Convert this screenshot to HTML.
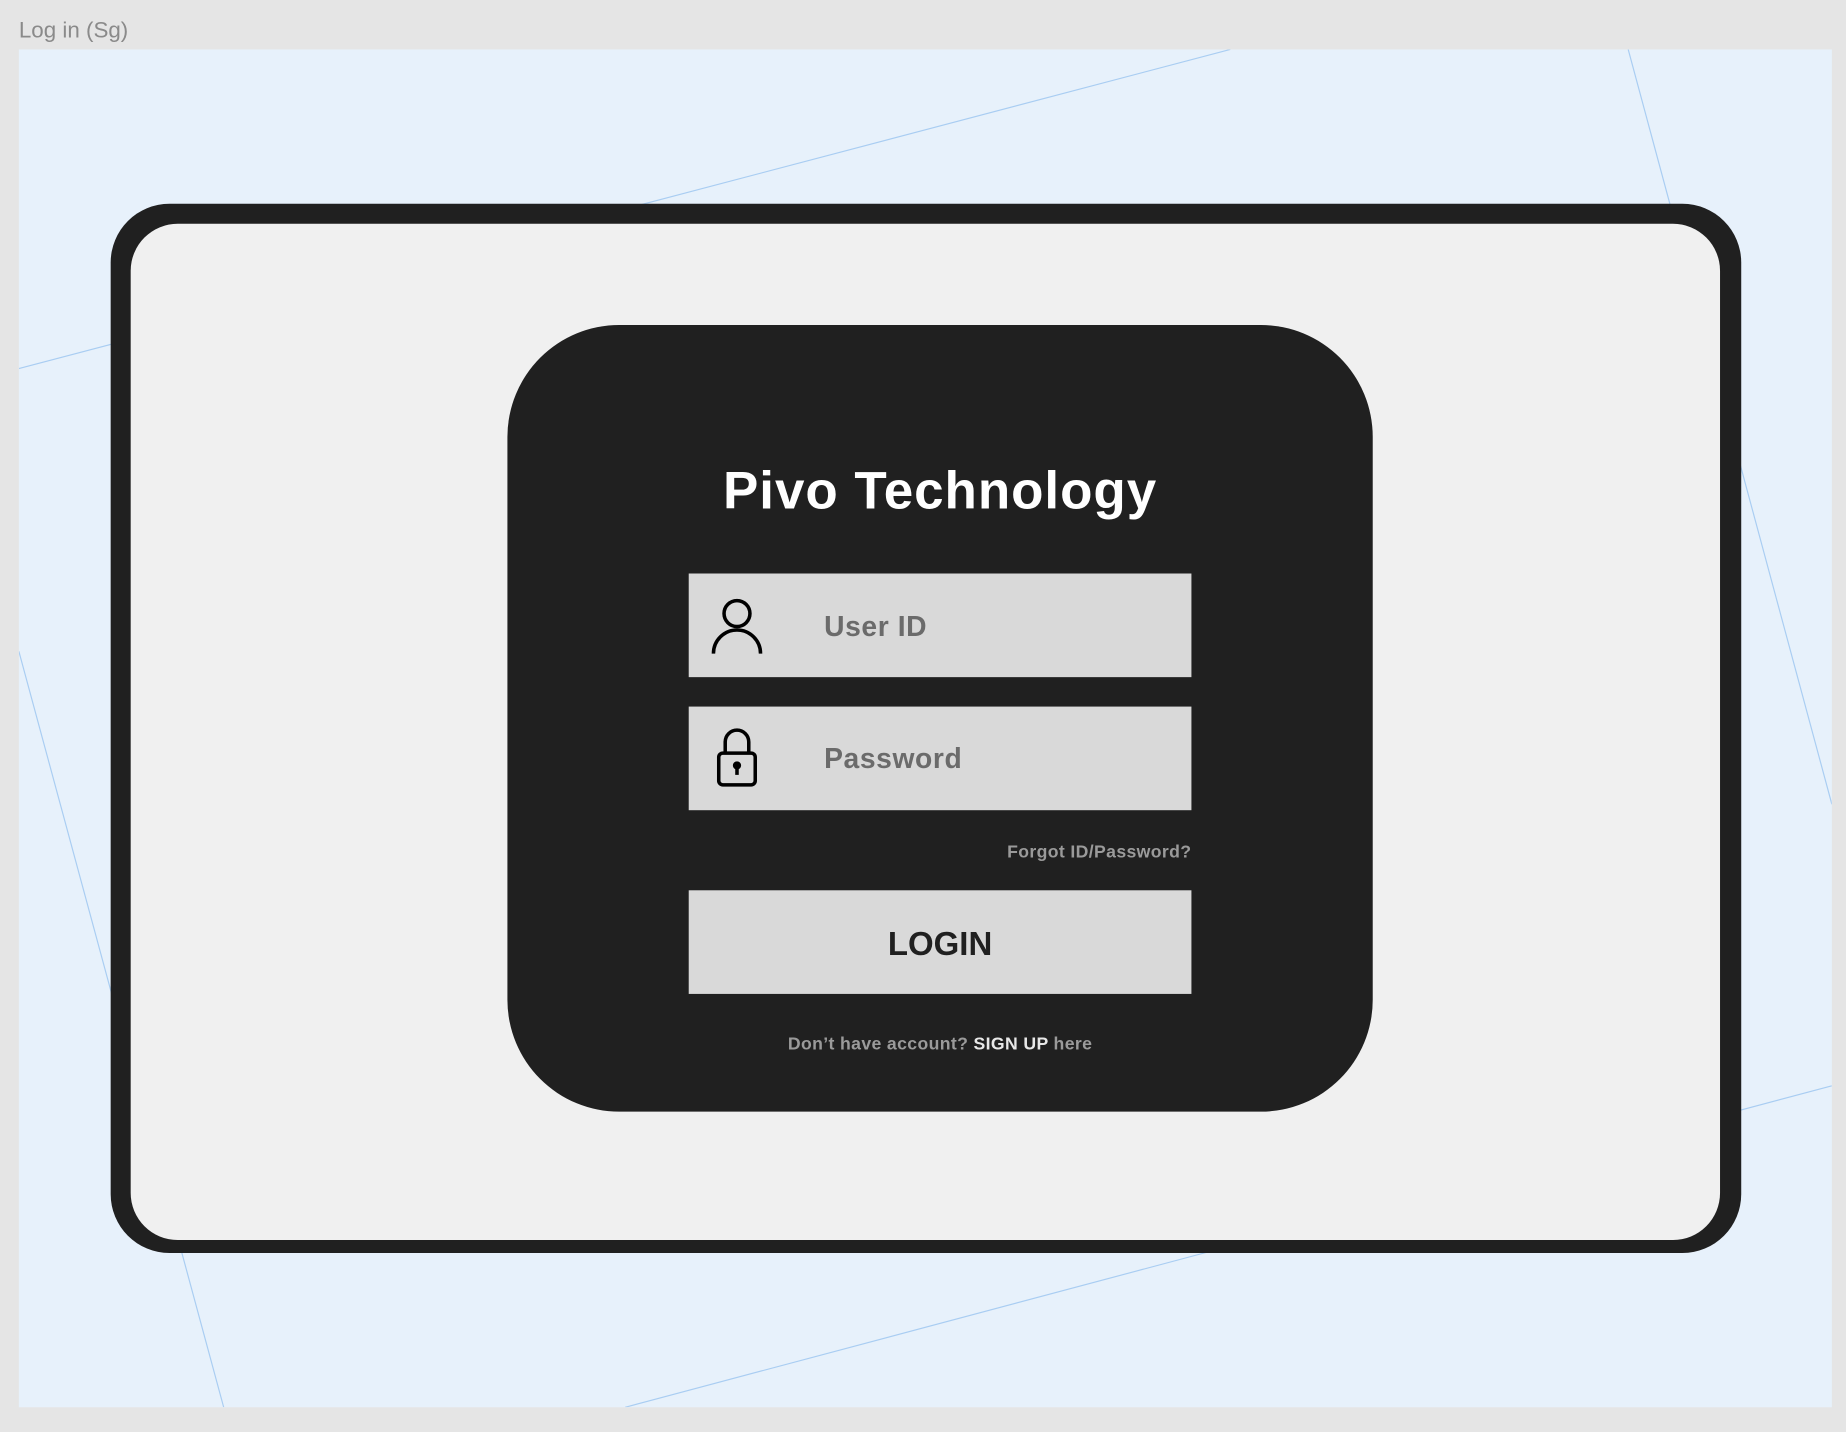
<!DOCTYPE html>
<html><head><meta charset="utf-8"><style>
html,body{margin:0;padding:0;background:#e5e5e5;overflow:hidden}
#s{position:absolute;left:0;top:0;width:1568px;height:1216px;transform:scale(1.17730,1.17763);transform-origin:0 0;font-family:"Liberation Sans",sans-serif}
.a{position:absolute}
</style></head><body><div id="s">
<div class="a" style="left:16px;top:16px;font-size:19px;color:#8a8a8a">Log in (Sg)</div>
<div class="a" style="left:16px;top:42px;width:1540px;height:1153px;background:#e7f1fb;overflow:hidden">
<svg width="1540" height="1153" viewBox="16 42 1540 1153" style="position:absolute;left:0;top:0">
<g stroke="#a9cdf2" stroke-width="1" fill="none">
<line x1="16" y1="313" x2="1045" y2="42"/>
<line x1="1383" y1="42" x2="1556" y2="683"/>
<line x1="16" y1="553" x2="190" y2="1195"/>
<line x1="531" y1="1195" x2="1556" y2="922"/>
</g></svg>
</div>
<div class="a" style="left:94px;top:173px;width:1385px;height:891px;background:#202020;border-radius:50px"></div>
<div class="a" style="left:111px;top:190px;width:1350px;height:863px;background:#f0f0f0;border-radius:40px"></div>
<div class="a" style="left:431px;top:276px;width:735px;height:668px;background:#202020;border-radius:95px"></div>
<div class="a" style="left:431px;top:388px;width:735px;text-align:center;color:#fff;font-weight:bold;font-size:45px;letter-spacing:0.8px;line-height:58px">Pivo Technology</div>
<div class="a" style="left:585px;top:487px;width:427px;height:88px;background:#d9d9d9"></div>
<div class="a" style="left:585px;top:600px;width:427px;height:88px;background:#d9d9d9"></div>
<svg class="a" style="left:585px;top:487px" width="80" height="201" viewBox="0 0 80 201">
<g fill="none" stroke="#000" stroke-width="3">
<circle cx="41" cy="34" r="11"/>
<path d="M21 68 A20 20 0 0 1 61 68"/>
<path d="M31 152 V143 A10 10 0 0 1 51 143 V152"/>
<rect x="25.5" y="152.5" width="31" height="27" rx="3.5"/>
</g>
<circle cx="41" cy="163" r="3.5" fill="#000"/><rect x="39.5" y="164" width="3" height="7" fill="#000"/>
</svg>
<div class="a" style="left:700px;top:519px;font-size:24px;font-weight:bold;letter-spacing:0.5px;color:#6b6b6b">User ID</div>
<div class="a" style="left:700px;top:631px;font-size:24px;font-weight:bold;letter-spacing:0.5px;color:#6b6b6b">Password</div>
<div class="a" style="left:700px;top:715px;width:312px;text-align:right;font-size:15px;font-weight:bold;letter-spacing:0.3px;color:#9a9a9a">Forgot ID/Password?</div>
<div class="a" style="left:585px;top:756px;width:427px;height:88px;background:#d9d9d9;text-align:center;line-height:92px;font-size:28px;font-weight:bold;color:#202020">LOGIN</div>
<div class="a" style="left:431px;top:878px;width:735px;text-align:center;font-size:15px;font-weight:bold;letter-spacing:0.3px;color:#9a9a9a">Don’t have account? <span style="color:#e8e8e8">SIGN UP</span> here</div>
</div></body></html>
